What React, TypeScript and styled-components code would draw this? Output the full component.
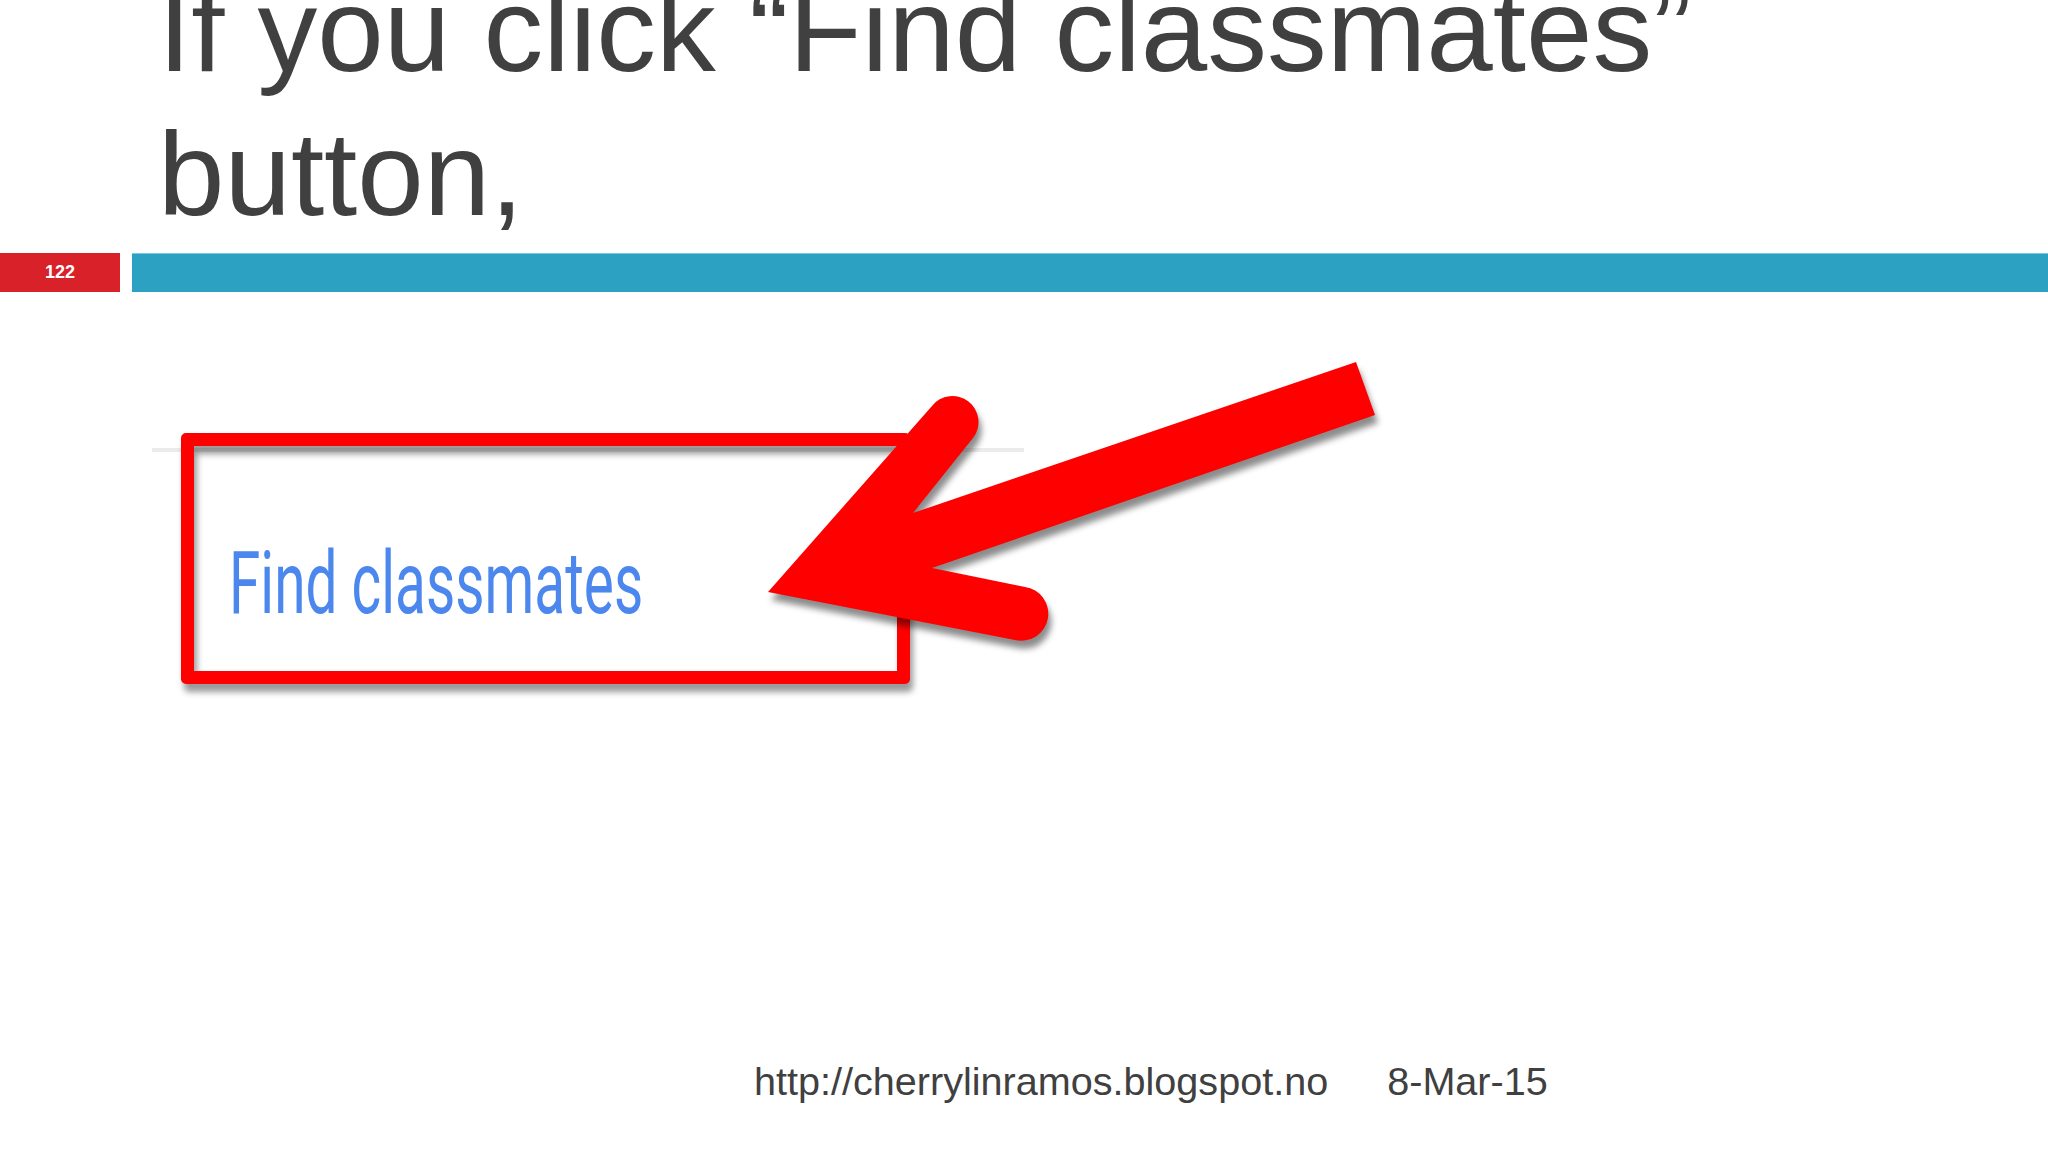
import React from "react";
import styled, { createGlobalStyle } from "styled-components";

const GlobalStyle = createGlobalStyle`
  html, body {
    margin: 0;
    padding: 0;
    background: #ffffff;
  }
  body {
    font-family: "Liberation Sans", Arial, sans-serif;
  }
`;

const Page = styled.div`
  position: relative;
  width: 2048px;
  height: 1152px;
  overflow: hidden;
  background: #ffffff;
  display: flex;
  flex-direction: column;
`;

const Title = styled.h1`
  margin: -42px 0 0 0;
  padding-left: 158px;
  width: 1640px;
  font-family: "Liberation Sans", Arial, sans-serif;
  font-weight: 400;
  font-size: 119.5px;
  line-height: 144px;
  color: #404040;
`;

const HeaderBar = styled.div`
  display: flex;
  gap: 12px;
  height: 39px;
  margin-top: 7px;
`;

const SlideNumber = styled.div`
  width: 120px;
  display: flex;
  align-items: center;
  justify-content: center;
  background: #d9212a;
  color: #ffffff;
  font-weight: 700;
  font-size: 18px;
`;

const RuleBar = styled.div`
  flex: 1;
  background: #2ca1c1;
  border-top: 1px solid #7cc8dc;
`;

const Stage = styled.div`
  height: 766px;
  display: flex;
  flex-direction: column;
`;

const ShotCard = styled.div`
  margin: 156px 0 0 152px;
  width: 872px;
  border-top: 4px solid #ebebeb;
  padding: 87px 0 0 77px;
  box-sizing: border-box;
`;

const ShotLink = styled.span`
  display: inline-block;
  font-family: Roboto, "Liberation Sans", sans-serif;
  font-size: 88px;
  line-height: 88px;
  color: #4c87ee;
  transform: scaleX(0.645);
  transform-origin: left center;
  white-space: nowrap;
`;

const Footer = styled.div`
  display: flex;
  gap: 59px;
  padding-left: 754px;
  font-family: "Liberation Sans", Arial, sans-serif;
  font-size: 39.6px;
  line-height: 46px;
  color: #404040;
`;

const Highlight = styled.div`
  position: absolute;
  left: 181px;
  top: 433px;
  width: 729px;
  height: 251px;
  box-sizing: border-box;
  border: 13px solid #ff0000;
  border-radius: 5px;
  filter: drop-shadow(3px 8px 3px rgba(0, 0, 0, 0.4));
`;

const ArrowSvg = styled.svg`
  position: absolute;
  left: 750px;
  top: 340px;
  width: 650px;
  height: 320px;
  overflow: visible;
  filter: drop-shadow(3px 8px 3px rgba(0, 0, 0, 0.45));
`;

const Arrow = () => (
  <ArrowSvg viewBox="750 340 650 320">
    <path
      fill="#ff0000"
      d="M 768 592 L 932 406 A 26 26 0 0 1 973 438 L 913 513 L 1356 362 L 1375 415 L 932 568 L 1025 587 A 27 27 0 1 1 1015 640 Z"
    />
  </ArrowSvg>
);

export default function App() {
  return (
    <Page>
      <GlobalStyle />
      <Title>If you click “Find classmates” button,</Title>
      <HeaderBar>
        <SlideNumber>122</SlideNumber>
        <RuleBar />
      </HeaderBar>
      <Stage>
        <ShotCard>
          <ShotLink>Find classmates</ShotLink>
        </ShotCard>
      </Stage>
      <Footer>
        <span>http://cherrylinramos.blogspot.no</span>
        <span>8-Mar-15</span>
      </Footer>
      <Highlight />
      <Arrow />
    </Page>
  );
}
